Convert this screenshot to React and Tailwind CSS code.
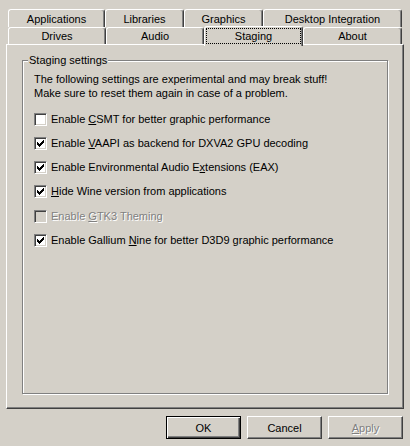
function Check() {
  // classic 7x7 tick
  const px = [
    [6, 0], [5, 1], [6, 1], [0, 2], [4, 2], [5, 2], [6, 2],
    [0, 3], [1, 3], [3, 3], [4, 3], [5, 3], [0, 4], [1, 4], [2, 4], [3, 4], [4, 4],
    [1, 5], [2, 5], [3, 5], [2, 6],
  ];
  return (
    <svg width="7" height="7" viewBox="0 0 7 7" shapeRendering="crispEdges">
      {px.map(([x, y]) => <rect key={x + "-" + y} x={x} y={y} width="1" height="1" fill="#000" />)}
    </svg>
  );
}

function CheckRow({ checked, disabled, children }) {
  return (
    <div className="flex h-6 items-center">
      <span
        className={`flex h-[13px] w-[13px] shrink-0 items-center justify-center border border-t-[#808080] border-l-[#808080] border-r-white border-b-white shadow-[inset_1px_1px_0_#404040,inset_-1px_-1px_0_#d4d0c8] ${disabled ? "bg-[#d4d0c8]" : "bg-white"}`}
      >
        {checked && <Check />}
      </span>
      <span className={`ml-[4px] ${disabled ? "text-[#808080] [text-shadow:1px_1px_0_#fff]" : "text-black"}`}>
        {children}
      </span>
    </div>
  );
}

function Tab({ label, className }) {
  return (
    <div
      className={`flex items-center justify-center rounded-t-[3px] border-t border-l border-r border-t-white border-l-white border-r-[#404040] shadow-[inset_-1px_0_0_#808080] bg-[#d4d0c8] ${className}`}
    >
      {label}
    </div>
  );
}

function Btn({ children, isDefault, disabled }) {
  const frame = isDefault
    ? "border border-black shadow-[inset_1px_1px_0_#fff,inset_-1px_-1px_0_#404040,inset_-2px_-2px_0_#808080]"
    : "border border-t-white border-l-white border-r-[#404040] border-b-[#404040] shadow-[inset_-1px_-1px_0_#808080]";
  return (
    <button
      className={`flex h-[23px] w-[75px] items-center justify-center bg-[#d4d0c8] ${frame} ${disabled ? "text-[#808080] [text-shadow:1px_1px_0_#fff]" : "text-black"}`}
    >
      {children}
    </button>
  );
}

export default function App() {
  return (
    <div className="h-[446px] w-[410px] overflow-hidden bg-[#d4d0c8] pt-[9px] font-['Liberation_Sans',Arial,sans-serif] text-[11px] leading-[14px] text-black">
      <div className="px-2">
        <div className="flex h-[18px]">
          <Tab label="Applications" className="w-[97px]" />
          <Tab label="Libraries" className="w-[79px]" />
          <Tab label="Graphics" className="w-[79px]" />
          <Tab label="Desktop Integration" className="w-[139px]" />
        </div>
        <div className="flex h-[17px] items-start">
          <Tab label="Drives" className="h-[17px] w-[98px]" />
          <Tab label="Audio" className="h-[17px] w-[98px]" />
          <div className="relative z-10 -mt-px flex h-[20px] w-[99px] rounded-t-[3px] border-t border-l border-r border-t-white border-l-white border-r-[#404040] bg-[#d4d0c8] p-px pb-[2px] shadow-[inset_-1px_0_0_#808080]">
            <div className="flex flex-1 items-center justify-center border border-dotted border-black">Staging</div>
          </div>
          <Tab label="About" className="h-[17px] w-[99px]" />
        </div>
      </div>

      <div className="mx-[6px] h-[365px] w-[398px] border border-t-white border-l-white border-r-[#404040] border-b-[#404040] pl-[15px] pt-[15px] shadow-[inset_-1px_-1px_0_#808080]">
        <div className="relative h-[334px] w-[366px] border border-[#808080] pl-[11px] pt-[11px] shadow-[inset_1px_1px_0_#fff,1px_1px_0_#fff]">
          <span className="absolute -top-[8px] left-[5px] bg-[#d4d0c8] px-px">Staging settings</span>
          <p>
            The following settings are experimental and may break stuff!
            <br />
            Make sure to reset them again in case of a problem.
          </p>
          <div className="mt-[7px] flex flex-col">
            <CheckRow>Enable <u>C</u>SMT for better graphic performance</CheckRow>
            <CheckRow checked>Enable <u>V</u>AAPI as backend for DXVA2 GPU decoding</CheckRow>
            <CheckRow checked>Enable Environmental Audio E<u>x</u>tensions (EAX)</CheckRow>
            <CheckRow checked><u>H</u>ide Wine version from applications</CheckRow>
            <div className="mt-px">
              <CheckRow disabled>Enable <u>G</u>TK3 Theming</CheckRow>
            </div>
            <CheckRow checked>Enable Gallium <u>N</u>ine for better D3D9 graphic performance</CheckRow>
          </div>
        </div>
      </div>

      <div className="mt-[7px] flex justify-end gap-[6px] pr-[7px]">
        <Btn isDefault>OK</Btn>
        <Btn>Cancel</Btn>
        <Btn disabled><u>A</u>pply</Btn>
      </div>
    </div>
  );
}
